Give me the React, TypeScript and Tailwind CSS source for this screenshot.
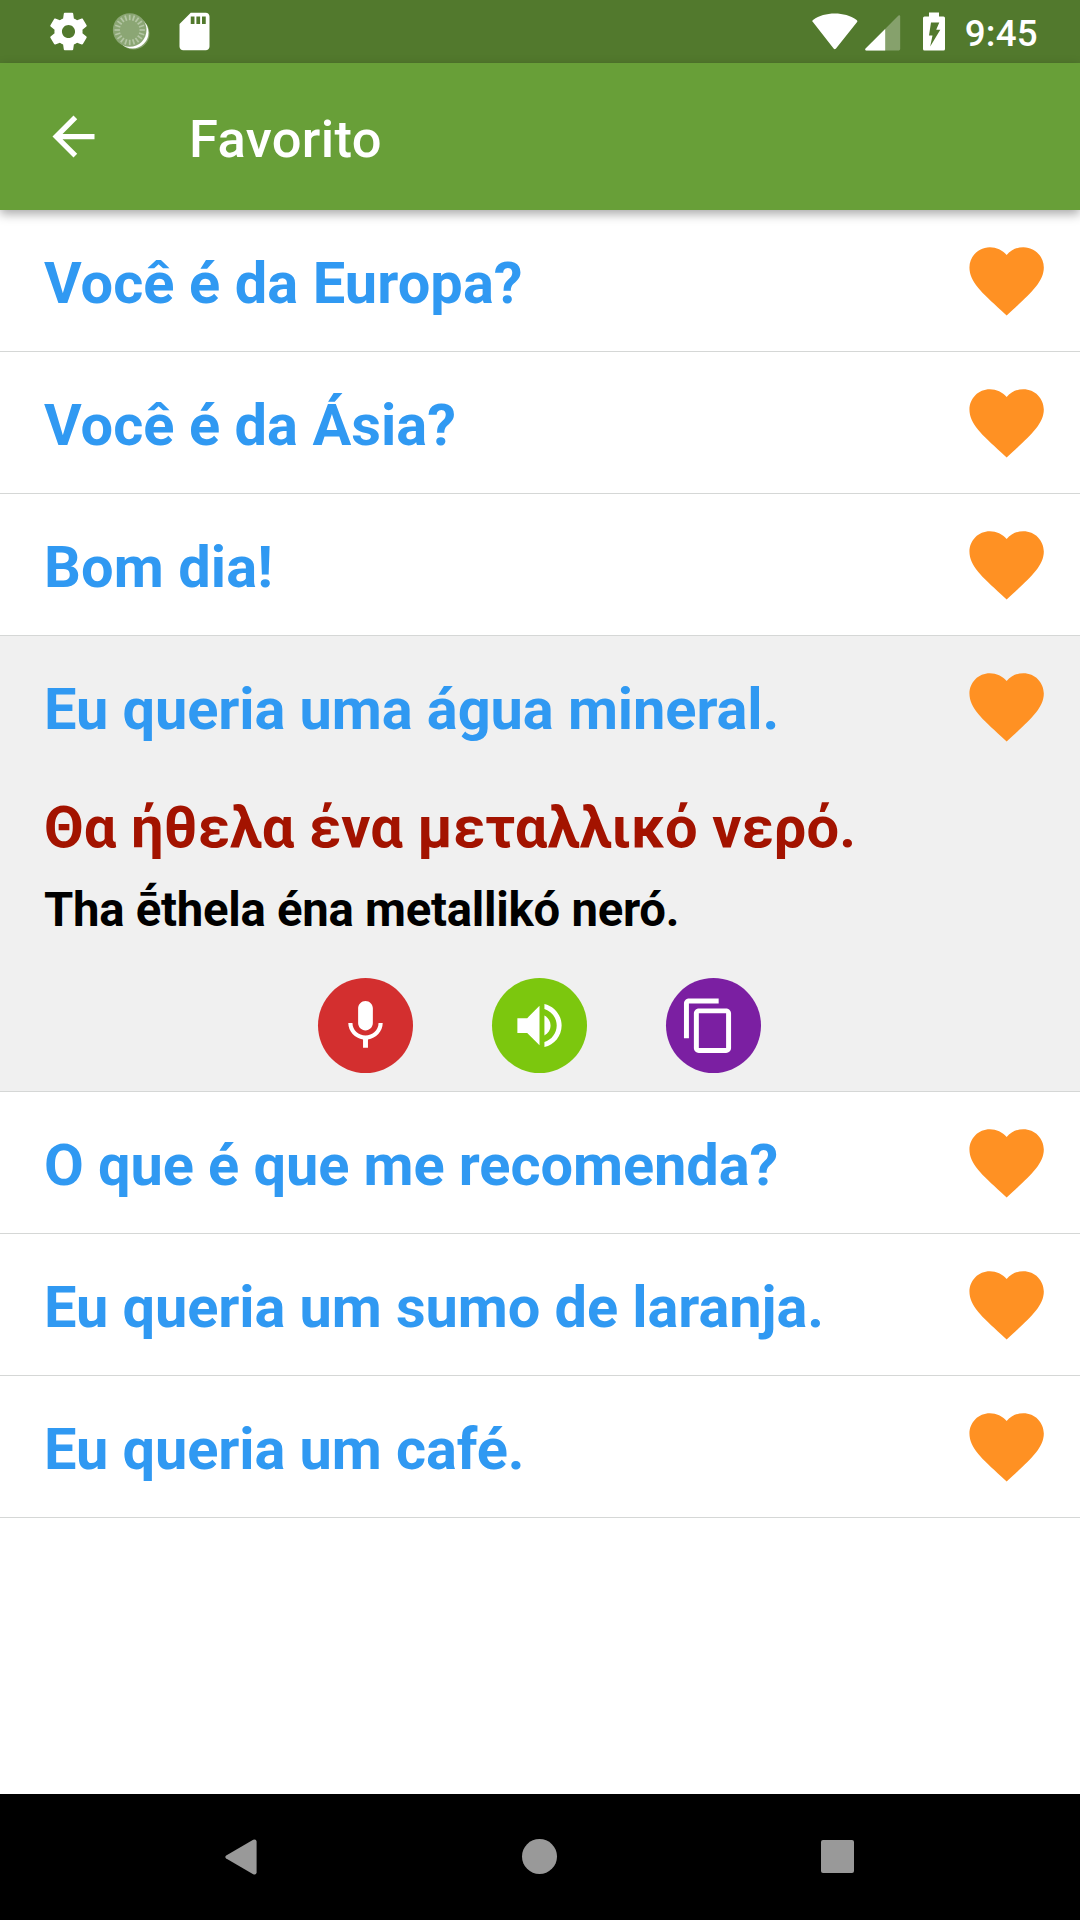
import React from "react";

interface Phrase {
    text: string;
    translation?: string;
    transliteration?: string;
    tracking?: string; // Tailwind tracking class
}

const phrases: Phrase[] = [
    { text: "Você é da Europa?", tracking: "tracking-[0.08px]" },
    { text: "Você é da Ásia?", tracking: "tracking-[0.05px]" },
    { text: "Bom dia!", tracking: "tracking-[0.1px]" },
    {
        text: "Eu queria uma água mineral.",
        translation: "Θα ήθελα ένα μεταλλικό νερό.",
        transliteration: "Tha ḗthela éna metallikó neró.",
    },
    { text: "O que é que me recomenda?" },
    { text: "Eu queria um sumo de laranja." },
    { text: "Eu queria um café." },
];

interface IconProps {
    d: string;
    className?: string;
}

function Icon({ d, className = "" }: IconProps) {
    return (
        <svg viewBox="0 0 24 24" fill="currentColor" className={`block shrink-0 ${className}`} aria-hidden="true">
            <path d={d} />
        </svg>
    );
}

const icons = {
    settings:
        "M19.43 12.98c.04-.32.07-.64.07-.98s-.03-.66-.07-.98l2.11-1.65c.19-.15.24-.42.12-.64l-2-3.46c-.12-.22-.39-.3-.61-.22l-2.49 1c-.52-.4-1.08-.73-1.69-.98l-.38-2.65C14.46 2.18 14.25 2 14 2h-4c-.25 0-.46.18-.49.42l-.38 2.65c-.61.25-1.17.59-1.69.98l-2.49-1c-.23-.09-.49 0-.61.22l-2 3.46c-.13.22-.07.49.12.64l2.11 1.65c-.04.32-.07.65-.07.98s.03.66.07.98l-2.11 1.65c-.19.15-.24.42-.12.64l2 3.46c.12.22.39.3.61.22l2.49-1c.52.4 1.08.73 1.69.98l.38 2.65c.03.24.24.42.49.42h4c.25 0 .46-.18.49-.42l.38-2.65c.61-.25 1.17-.59 1.69-.98l2.49 1c.23.09.49 0 .61-.22l2-3.46c.12-.22.07-.49-.12-.64l-2.11-1.65zM12 15.5c-1.93 0-3.5-1.57-3.5-3.5s1.57-3.5 3.5-3.5 3.5 1.57 3.5 3.5-1.57 3.5-3.5 3.5z",
    sdCard: "M18 2h-8L4.02 8 4 20c0 1.1.9 2 2 2h12c1.1 0 2-.9 2-2V4c0-1.1-.9-2-2-2zm-6 6h-2V4h2v4zm3 0h-2V4h2v4zm3 0h-2V4h2v4z",
    back: "M20 11H7.83l5.59-5.59L12 4l-8 8 8 8 1.41-1.41L7.83 13H20v-2z",
    heart: "M12 21.35l-1.45-1.32C5.4 15.36 2 12.28 2 8.5 2 5.42 4.42 3 7.5 3c1.74 0 3.41.81 4.5 2.09C13.09 3.81 14.76 3 16.5 3 19.58 3 22 5.42 22 8.5c0 3.78-3.4 6.86-8.55 11.54L12 21.35z",
    mic: "M12 14c1.66 0 2.99-1.34 2.99-3L15 5c0-1.66-1.34-3-3-3S9 3.34 9 5v6c0 1.66 1.34 3 3 3zm5.3-3c0 3-2.54 5.1-5.3 5.1S6.7 14 6.7 11H5c0 3.41 2.72 6.23 6 6.72V21h2v-3.28c3.28-.48 6-3.3 6-6.72h-1.7z",
    volume: "M3 9v6h4l5 5V4L7 9H3zm13.5 3c0-1.77-1.02-3.29-2.5-4.03v8.05c1.48-.73 2.5-2.25 2.5-4.02zM14 3.23v2.06c2.89.86 5 3.54 5 6.71s-2.11 5.85-5 6.71v2.06c4.01-.91 7-4.49 7-8.77s-2.99-7.86-7-8.77z",
    copy: "M16 1H4c-1.1 0-2 .9-2 2v14h2V3h12V1zm3 4H8c-1.1 0-2 .9-2 2v14c0 1.1.9 2 2 2h11c1.1 0 2-.9 2-2V7c0-1.1-.9-2-2-2zm0 16H8V7h11v14z",
};

function SyncBadge() {
    const ticks = Array.from({ length: 20 }, (_, i) => i * 18);
    return (
        <svg viewBox="0 0 40 40" className="block h-10 w-10 shrink-0" aria-hidden="true">
            <circle cx="22.5" cy="21.5" r="16" fill="#fff" fillOpacity="0.3" />
            <circle cx="21.5" cy="20.5" r="16" fill="#fff" />
            <circle cx="18.7" cy="18" r="16.800" fill="#8ba674" />
            {ticks.map((angle) => (
                <path
                    key={angle}
                    d="M18.7 2.8V8.200"
                    stroke="#b4c6a4"
                    strokeWidth="1.7"
                    transform={`rotate(${angle} 18.7 18)`}
                />
            ))}
        </svg>
    );
}

function StatusBar() {
    return (
        <div className="flex h-[63px] items-center bg-[#52792d] pr-[42px] pl-[46px] text-white">
            <Icon d={icons.settings} className="h-[45px] w-[45px]" />
            <div className="ml-5 pt-px">
                <SyncBadge />
            </div>
            <Icon d={icons.sdCard} className="ml-[21px] h-[45px] w-[45px]" />
            <div className="ml-auto flex items-center">
                <svg viewBox="0 0 46 40" className="h-10 w-[46px]" fill="currentColor" aria-hidden="true">
                    <path d="M1.3 10.6C-.1 9.4 0 8.7 1.3 7.7C7 3.8 14.5 1.6 22.8 1.6C31 1.6 38.5 3.8 44.3 7.7C45.7 8.7 45.7 9.4 44.5 10.7L24 36.5C23.2 37.4 22.4 37.4 21.6 36.5Z" />
                </svg>
                <svg viewBox="0 0 36 40" className="ml-[7px] h-10 w-9" fill="currentColor" aria-hidden="true">
                    <path d="M.4 36.8 33.5 3.6Q35 2.6 35.2 4.4V37Q35 38.4 33.8 38.5H1.4Q-.3 38.3.4 36.8Z" fillOpacity="0.3" />
                    <path d="M.4 36.8 20.2 17V38.5H1.4Q-.3 38.3.4 36.8Z" />
                </svg>
                <svg viewBox="0 0 22 40" className="ml-[22px] h-10 w-[22px]" fill="currentColor" aria-hidden="true">
                    <path
                        fillRule="evenodd"
                        d="M6 0.5H16V4.5H20.5Q22 4.5 22 6V37Q22 38.5 20.5 38.5H1.5Q0 38.5 0 37V6Q0 4.5 1.5 4.5H6ZM8 10.5 6 23.5H9.5L7.2 34.5 17.3 17.8H13.2L16.3 10.5Z"
                    />
                </svg>
                <span className="ml-5 pt-[4px] text-[36.75px] leading-[42px] font-medium tracking-[0.25px]">9:45</span>
            </div>
        </div>
    );
}

function AppBar({ title }: { title: string }) {
    return (
        <header className="relative z-10 flex h-[147px] items-center bg-[#689f38] pl-[42px] text-white shadow-[0_4px_10px_rgba(0,0,0,0.34)]">
            <Icon d={icons.back} className="h-[63px] w-[63px]" />
            <h1 className="ml-[84px] pt-[5px] text-[52.5px] leading-[62px] font-medium tracking-[0.35px]">{title}</h1>
        </header>
    );
}

function PhraseRow({ text, translation, transliteration, tracking = "tracking-[-0.09px]" }: Phrase) {
    return (
        <li className={`border-b border-[#d5d7d6] ${translation ? "bg-[#f0f0f0]" : "bg-white"}`}>
            <div className="flex h-[141px] items-center justify-between pr-[29px] pl-11">
                <span className={`pt-[5px] text-[57.75px] leading-[68px] font-bold text-[#3099f2] ${tracking}`}>{text}</span>
                <Icon d={icons.heart} className="h-[89.25px] w-[89.25px] text-[#ff9123]" />
            </div>
            {translation && (
                <div className="flex h-[314px] flex-col px-11 pt-[15px]">
                    <p className="text-[57.75px] leading-[70px] font-bold tracking-[0.09px] text-[#a31300]">{translation}</p>
                    <p className="mt-[18px] text-[47.25px] leading-[60px] font-bold tracking-[-0.25px] text-black">
                        {transliteration}
                    </p>
                    <div className="mt-[38px] flex justify-center gap-[79px] pr-[2px] text-white">
                        <button className="flex h-[95px] w-[95px] items-center justify-center rounded-full bg-[#d32f2f]">
                            <Icon d={icons.mic} className="h-[59px] w-[59px]" />
                        </button>
                        <button className="flex h-[95px] w-[95px] items-center justify-center rounded-full bg-[#7cc70e]">
                            <Icon d={icons.volume} className="h-[59px] w-[59px]" />
                        </button>
                        <button className="flex h-[95px] w-[95px] items-center justify-center rounded-full bg-[#7b1fa2] pr-[9px]">
                            <Icon d={icons.copy} className="h-[59.5px] w-[59.5px]" />
                        </button>
                    </div>
                </div>
            )}
        </li>
    );
}

function NavigationBar() {
    return (
        <nav className="flex h-[126px] items-center justify-between bg-black pr-[226px] pb-px pl-[225px] text-[#999]">
            <svg viewBox="0 0 32 36" className="h-9 w-8" fill="currentColor" aria-hidden="true">
                <path d="M1.2 16.4 28.2.8Q31.3-.4 31.6 2.6V33.4Q31.3 36.400 28.2 35.2L1.2 19.600Q-.6 18 1.2 16.4Z" />
            </svg>
            <div className="h-[35px] w-[35px] rounded-full bg-[#999]" />
            <div className="h-[33px] w-[33px] rounded-[2px] bg-[#999]" />
        </nav>
    );
}

export default function App() {
    return (
        <div className="flex h-[1920px] w-[1080px] flex-col overflow-hidden bg-white font-['Roboto',sans-serif]">
            <StatusBar />
            <AppBar title="Favorito" />
            <ul className="flex-1">
                {phrases.map((phrase) => (
                    <PhraseRow key={phrase.text} {...phrase} />
                ))}
            </ul>
            <NavigationBar />
        </div>
    );
}
